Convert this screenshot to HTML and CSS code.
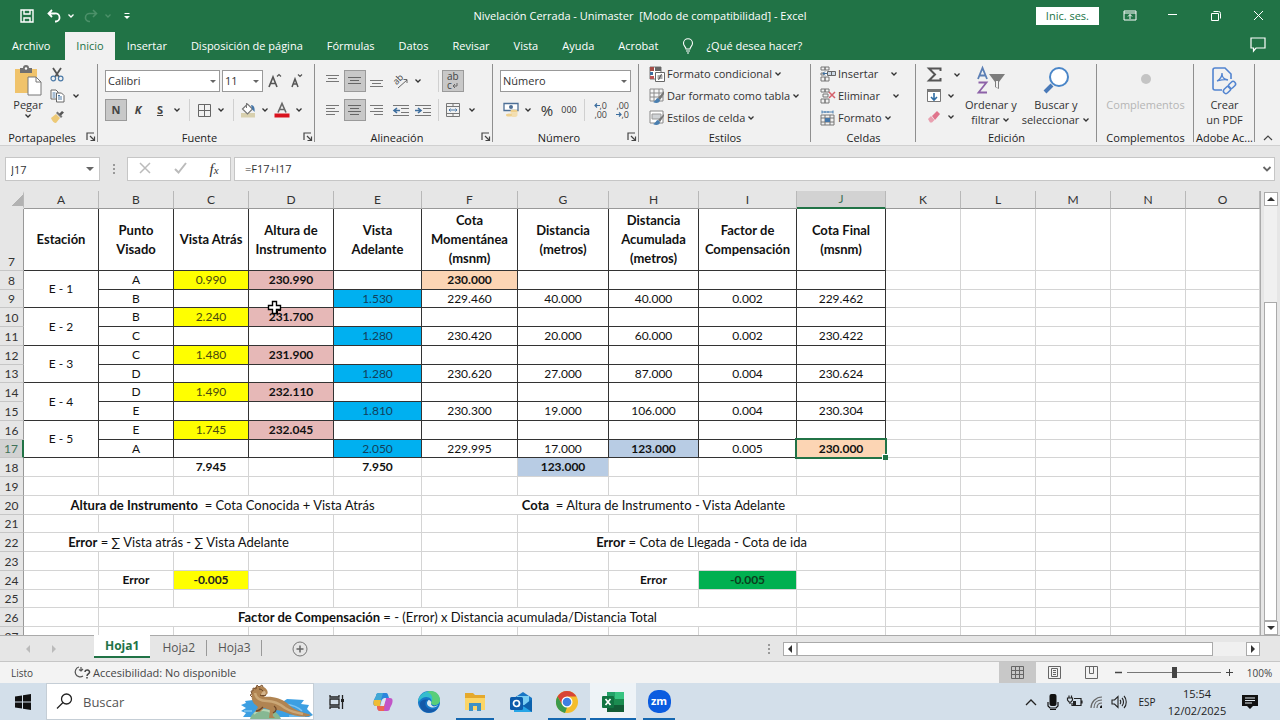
FILE: index.html
```html
<!DOCTYPE html>
<html lang="es">
<head>
<meta charset="utf-8">
<title>Nivelación Cerrada - Unimaster - Excel</title>
<link rel="stylesheet" href="styles.css">
</head>
<body>
<svg class="defs" aria-hidden="true">
  <symbol id="chev" viewBox="0 0 8 8"><path d="M1.500 2.500 4 5l2.500-2.500" fill="none" stroke="currentColor" stroke-width="1.300"/></symbol>
  <symbol id="launch" viewBox="0 0 10 10"><path d="M1 8V1h7M4 4l4 4M8.500 4.500v4h-4" fill="none" stroke="#444" stroke-width="1.200"/></symbol>
  <symbol id="brushgrid" viewBox="0 0 16 16"><path d="M1 1h13v12H1zM1 5h13M1 9h13M5 1v12M10 1v12" fill="#f6f6f6" stroke="#8a8a8a"/><path d="m15 3-6 7 2 2 4-6z" fill="#777"/><path d="M9 10c-2 0-2 3-5 4 3 2 7 1 7-2z" fill="#4a7fb0"/></symbol>
</svg>

<header class="titlebar">
  <div class="quick">
    <button class="q" aria-label="Guardar"><svg width="14" height="14" viewBox="0 0 14 14"><path d="M1 1h12v12H1zM4 1v4h6V1M4 13V9h6v4" fill="none" stroke="#fff" stroke-width="1.400"/></svg></button>
    <button class="q" aria-label="Deshacer"><svg width="14" height="14" viewBox="0 0 14 14"><path d="M5 1 1.500 4.500 5 8M2 4.500h6a4 4 0 0 1 1 8H8" fill="none" stroke="#fff" stroke-width="1.800"/></svg></button>
    <button class="q narrow" aria-label="Opciones de deshacer"><svg width="8" height="8"><use href="#chev"/></svg></button>
    <button class="q dim" aria-label="Rehacer"><svg width="14" height="14" viewBox="0 0 14 14"><path d="M9 1l3.500 3.500L9 8M12 4.500H6a4 4 0 0 0-1 8h1" fill="none" stroke="currentColor" stroke-width="1.600"/></svg></button>
    <button class="q narrow dim" aria-label="Opciones de rehacer"><svg width="8" height="8"><use href="#chev"/></svg></button>
    <button class="q more" aria-label="Personalizar"><svg width="8" height="8" viewBox="0 0 8 8"><path d="M1.500 1.500h5" stroke="#fff"/><path d="M1 4h6L4 7z" fill="#fff"/></svg></button>
  </div>
  <h1>Nivelación Cerrada - Unimaster&nbsp; [Modo de compatibilidad] - Excel</h1>
  <div class="window">
    <button class="signin">Inic. ses.</button>
    <button class="w" aria-label="Opciones de la cinta"><svg width="14" height="12" viewBox="0 0 14 12"><path d="M1 1h12v9H1zM1 3h12M7 9V4.500M5 6.500l2-2 2 2" fill="none" stroke="#fff"/></svg></button>
    <button class="w" aria-label="Minimizar"><svg width="12" height="12"><path d="M1 4.500h9" stroke="#fff"/></svg></button>
    <button class="w" aria-label="Restaurar"><svg width="12" height="12" viewBox="0 0 12 12"><path d="M1.500 3.500h7v7h-7zM3.500 1.500h5a2 2 0 0 1 2 2v5" fill="none" stroke="#fff"/></svg></button>
    <button class="w" aria-label="Cerrar"><svg width="12" height="12"><path d="M1 1l9 9M10 1 1 10" stroke="#fff"/></svg></button>
  </div>
</header>

<nav class="tabs">
  <button>Archivo</button><button class="active">Inicio</button><button>Insertar</button><button>Disposición de página</button><button>Fórmulas</button><button>Datos</button><button>Revisar</button><button>Vista</button><button>Ayuda</button><button>Acrobat</button>
  <button class="tell"><svg width="12" height="16" viewBox="0 0 12 16"><path d="M4 11C4 9 1.500 8 1.500 5.200a4.500 4.500 0 0 1 9 0C10.500 8 8 9 8 11zM4 13h4M5 15h2" fill="none" stroke="#fff" stroke-width="1.100"/></svg>¿Qué desea hacer?</button>
  <button class="comment" aria-label="Comentarios"><svg width="16" height="15" viewBox="0 0 16 15"><path d="M1 1h14v10H6l-2.500 3v-3H1z" fill="none" stroke="#fff" stroke-width="1.200"/></svg></button>
</nav>

<section class="ribbon">
  <div class="group g-clip">
    <div class="tools side">
      <button class="big"><svg width="28" height="30" viewBox="0 0 28 30"><path d="M1 3h22v24H1z" fill="#f0c36b"/><path d="M6 2h3a3 3 0 0 1 6 0h3v5H6z" fill="#707070"/><circle cx="12" cy="2.500" r="1.200" fill="#fff"/><path d="M14 11h8l5 5v13H14z" fill="#fff" stroke="#777"/><path d="M22 11v5h5" fill="none" stroke="#777"/></svg><span>Pegar</span><svg width="8" height="8"><use href="#chev"/></svg></button>
      <div class="stack">
        <div class="line"><button class="t" aria-label="Cortar"><svg width="14" height="15" viewBox="0 0 14 15"><path d="M3 1l6 9M11 1 5 10" stroke="#555" stroke-width="1.800"/><circle cx="3.300" cy="11.500" r="2.300" fill="none" stroke="#4d7ba8" stroke-width="1.200"/><circle cx="10.700" cy="11.500" r="2.300" fill="none" stroke="#4d7ba8" stroke-width="1.200"/></svg></button></div>
        <div class="line"><button class="t" aria-label="Copiar"><svg width="15" height="14" viewBox="0 0 15 14"><path d="M1 1h5l2 2v7H1z" fill="#fff" stroke="#666"/><path d="M6.500 4h5L14 6.500V13H6.500z" fill="#fff" stroke="#666"/><path d="M2.500 4h3M2.500 6h3M2.500 8h3M8 8h4M8 10h4M8 6.500h2" stroke="#4d7ba8"/></svg></button><button class="c gap" aria-label="Opciones de copiar"><svg width="8" height="8"><use href="#chev"/></svg></button></div>
        <div class="line"><button class="t" aria-label="Copiar formato"><svg width="15" height="13" viewBox="0 0 15 13"><path d="m1 8 5-4 4 4-4 5c-2 0-4-2-5-5z" fill="#edc976"/><path d="m6 3 5 5 1.500-1.500-5-5z" fill="#777"/><path d="m9 4 3-3 2 1.500-3 3z" fill="#555"/></svg></button></div>
      </div>
    </div>
    <footer><span>Portapapeles</span><button class="launch" aria-label="Portapapeles"><svg width="10" height="10"><use href="#launch"/></svg></button></footer>
  </div>

  <div class="group g-font">
    <div class="tools">
      <div class="line">
        <span class="combo face"><select aria-label="Fuente"><option>Calibri</option></select></span>
        <span class="combo size"><select aria-label="Tamaño de fuente"><option>11</option></select></span>
        <button class="t" aria-label="Aumentar tamaño"><svg width="16" height="16" viewBox="0 0 16 16"><path d="M2 14 6 4l4 10M3.500 10.500h5" fill="none" stroke="#555" stroke-width="1.600"/><path d="m10 3.500 2-2 2 2" fill="none" stroke="#555" stroke-width="1.200"/></svg></button>
        <button class="t" aria-label="Disminuir tamaño"><svg width="16" height="16" viewBox="0 0 16 16"><path d="m3 14 3-8 3 8M4 11h4" fill="none" stroke="#555" stroke-width="1.500"/><path d="m9 1.500 2 2 2-2" fill="none" stroke="#555" stroke-width="1.200"/></svg></button>
      </div>
      <div class="line">
        <button class="t on bold">N</button><button class="t bold italic">K</button><button class="t bold under">S</button><button class="c" aria-label="Subrayado"><svg width="8" height="8"><use href="#chev"/></svg></button>
        <i class="sep"></i>
        <button class="t" aria-label="Bordes"><svg width="13" height="13"><path d="M.5.5h12v12H.5zM6.500.5v12M.5 6.500h12" fill="none" stroke="#666"/></svg></button><button class="c" aria-label="Opciones de bordes"><svg width="8" height="8"><use href="#chev"/></svg></button>
        <i class="sep"></i>
        <button class="t" aria-label="Color de relleno"><svg width="16" height="16" viewBox="0 0 16 16"><path d="M1 11h14v4.500H1z" fill="#d8d0ae"/><path d="m2.500 7 5-5 5 5-5 5z" fill="#fff" stroke="#777" stroke-width="1.200"/><path d="M6.500 6V1" stroke="#777"/><path d="M11 3c3 0 4 3 3.500 7L12 7z" fill="#4576a8"/></svg></button><button class="c" aria-label="Opciones de relleno"><svg width="8" height="8"><use href="#chev"/></svg></button>
        <button class="t" aria-label="Color de fuente"><svg width="16" height="16" viewBox="0 0 16 16"><path d="m4 10.500 4-9 4 9M5.500 7.500h5" fill="none" stroke="#666" stroke-width="1.600"/><path d="M.5 11.500h15v4H.5z" fill="#d9131e"/></svg></button><button class="c" aria-label="Opciones de color"><svg width="8" height="8"><use href="#chev"/></svg></button>
      </div>
    </div>
    <footer><span>Fuente</span><button class="launch" aria-label="Fuente"><svg width="10" height="10"><use href="#launch"/></svg></button></footer>
  </div>

  <div class="group g-align">
    <div class="tools">
      <div class="line">
        <button class="t" aria-label="Alinear arriba"><svg width="14" height="14"><path d="M0 1.500h13M2 4.500h9M0 7.500h13" stroke="#777"/></svg></button>
        <button class="t on" aria-label="Alinear en medio"><svg width="14" height="14"><path d="M0 3.500h13M2 6.500h9M0 9.500h13" stroke="#666"/></svg></button>
        <button class="t" aria-label="Alinear abajo"><svg width="14" height="14"><path d="M0 6.500h13M2 9.500h9M0 12.500h13" stroke="#777"/></svg></button>
        <button class="t gap" aria-label="Orientación"><svg width="16" height="16" viewBox="0 0 16 16"><text x="1" y="10" transform="rotate(-45 5 8)" class="glyph">ab</text><path d="m5 15 9-8M10.500 6.500H14V10" fill="none" stroke="#666"/></svg></button><button class="c" aria-label="Opciones de orientación"><svg width="8" height="8"><use href="#chev"/></svg></button>
        <i class="sep wide"></i>
        <button class="t on wrap" aria-label="Ajustar texto"><span>ab</span><span>c<svg width="6" height="6"><path d="M5 0v3H1m2-2L1 3l2 2" fill="none" stroke="#666"/></svg></span></button>
      </div>
      <div class="line">
        <button class="t" aria-label="Alinear a la izquierda"><svg width="14" height="12"><path d="M0 1.500h13M0 4.500h9M0 7.500h13M0 10.500h9" stroke="#777"/></svg></button>
        <button class="t on" aria-label="Centrar"><svg width="14" height="12"><path d="M0 1.500h13M2 4.500h9M0 7.500h13M2 10.500h9" stroke="#666"/></svg></button>
        <button class="t" aria-label="Alinear a la derecha"><svg width="14" height="12"><path d="M0 1.500h13M4 4.500h9M0 7.500h13M4 10.500h9" stroke="#777"/></svg></button>
        <button class="t gap" aria-label="Disminuir sangría"><svg width="16" height="13" viewBox="0 0 16 13"><path d="M0 1.500h16M8 4.500h8M8 8.500h8M0 11.500h16" stroke="#777"/><path d="M7 6.500H1M4 4 1 6.500 4 9" fill="none" stroke="#3d6e9e" stroke-width="1.600"/></svg></button>
        <button class="t" aria-label="Aumentar sangría"><svg width="16" height="13" viewBox="0 0 16 13"><path d="M0 1.500h16M8 4.500h8M8 8.500h8M0 11.500h16" stroke="#777"/><path d="M0 6.500h6M3 4l3 2.500L3 9" fill="none" stroke="#3d6e9e" stroke-width="1.600"/></svg></button>
        <i class="sep tight"></i>
        <button class="t" aria-label="Combinar y centrar"><svg width="14" height="14" viewBox="0 0 14 14"><path d="M.5.5h13v13H.5zM.5 3.500h13M.5 10.500h13M7 .5v3M7 10.500v3" fill="none" stroke="#777"/><path d="M3 7h8M4.500 5.500 3 7l1.500 1.500M9.500 5.500 11 7 9.500 8.500" fill="none" stroke="#4576a8"/></svg></button><button class="c gap" aria-label="Opciones de combinar"><svg width="8" height="8"><use href="#chev"/></svg></button>
      </div>
    </div>
    <footer><span>Alineación</span><button class="launch" aria-label="Alineación"><svg width="10" height="10"><use href="#launch"/></svg></button></footer>
  </div>

  <div class="group g-num">
    <div class="tools">
      <div class="line"><span class="combo format"><select aria-label="Formato de número"><option>Número</option></select></span></div>
      <div class="line">
        <button class="t" aria-label="Moneda"><svg width="16" height="16" viewBox="0 0 16 16"><path d="M1 1.500h14v7H1z" fill="#fff" stroke="#4d6f96" stroke-width="1.300"/><circle cx="8" cy="5" r="2" fill="#4d6f96"/><ellipse cx="11" cy="9" rx="3.500" ry="1.500" fill="#efd08c"/><path d="M7.500 9v4.500c1 2 6 2 7 0V9c-1 2-6 2-7 0z" fill="#f3deb0"/><ellipse cx="6" cy="13" rx="3" ry="1.500" fill="#efd08c"/></svg></button><button class="c" aria-label="Opciones de moneda"><svg width="8" height="8"><use href="#chev"/></svg></button>
        <button class="t gap percent">%</button><button class="t zeros">000</button>
        <i class="sep tight"></i>
        <button class="t digits" aria-label="Aumentar decimales"><span><svg width="6" height="7"><path d="M6 3.500H1m2-2-2 2 2 2" fill="none" stroke="#3d6e9e" stroke-width="1.200"/></svg>,0</span><span>,00</span></button>
        <button class="t digits" aria-label="Disminuir decimales"><span>,00</span><span><svg width="6" height="7"><path d="M0 3.500h5m-2-2 2 2-2 2" fill="none" stroke="#3d6e9e" stroke-width="1.200"/></svg>,0</span></button>
      </div>
    </div>
    <footer><span>Número</span><button class="launch" aria-label="Número"><svg width="10" height="10"><use href="#launch"/></svg></button></footer>
  </div>

  <div class="group g-style">
    <div class="tools list">
      <button class="item"><svg width="16" height="16" viewBox="0 0 16 16"><path d="M1 1h11v12H1z" fill="#fff" stroke="#777"/><path d="M1 1h4v4H1z" fill="#a44c46"/><path d="M6 1h6v4H6z" fill="#666"/><path d="M1 6h3v3H1z" fill="#3d6e9e"/><path d="M1 10h4v3H1z" fill="#b55"/><path d="M6.500 6.500h9v9h-9z" fill="#fff" stroke="#666"/><path d="M8.500 10h5M8.500 12h5M12.500 8l-3 6" stroke="#555"/></svg><span>Formato condicional</span><svg width="8" height="8"><use href="#chev"/></svg></button>
      <button class="item"><svg width="16" height="16"><use href="#brushgrid"/></svg><span>Dar formato como tabla</span><svg width="8" height="8"><use href="#chev"/></svg></button>
      <button class="item"><svg width="16" height="16" viewBox="0 0 16 16"><path d="M1 1h13v12H1z" fill="#fff" stroke="#888"/><path d="M3 4h9v5H3z" fill="#d0d3d6" stroke="#999"/><path d="m15 4-6 6 2 2 4-6z" fill="#777"/><path d="M9 10c-2 0-2 3-5 4 3 2 7 1 7-2z" fill="#4a7fb0"/></svg><span>Estilos de celda</span><svg width="8" height="8"><use href="#chev"/></svg></button>
    </div>
    <footer><span>Estilos</span></footer>
  </div>

  <div class="group g-cells">
    <div class="tools list">
      <button class="item"><svg width="16" height="16" viewBox="0 0 16 16"><path d="M1 1h4v3H1zM5 1h4v3H5zM1 11h4v4H1zM5 11h4v4H5zM1 7h3v2H1z" fill="none" stroke="#777"/><path d="M7.500 5.500h8v4h-8zM11.500 5.500v4" fill="#ccd9e6" stroke="#666"/><path d="M7 7.500H3m2-2-2 2 2 2" fill="none" stroke="#3d6e9e"/></svg><span>Insertar</span><svg class="push" width="8" height="8"><use href="#chev"/></svg></button>
      <button class="item"><svg width="16" height="16" viewBox="0 0 16 16"><path d="M1 1h4v3H1zM5 1h4v3H5zM1 11h4v4H1zM5 11h4v4H5zM3 6h5v3H3z" fill="none" stroke="#777"/><path d="m9 4 6 6M15 4l-6 6" stroke="#d5606a" stroke-width="1.500"/></svg><span>Eliminar</span><svg class="push" width="8" height="8"><use href="#chev"/></svg></button>
      <button class="item"><svg width="16" height="16" viewBox="0 0 16 16"><path d="M2 2h11M2 .5v3M13 .5v3M5 1v2M8 1v2" stroke="#4a7fb0"/><path d="M1 5h13v10H1zM1 8h13M1 12h13M5 5v10M10 5v10" fill="none" stroke="#777"/><path d="M5 8h5v4H5z" fill="#4576a8"/></svg><span>Formato</span><svg width="8" height="8"><use href="#chev"/></svg></button>
    </div>
    <footer><span>Celdas</span></footer>
  </div>

  <div class="group g-edit">
    <div class="tools side">
      <div class="stack">
        <div class="line"><button class="t" aria-label="Autosuma"><svg width="15" height="15" viewBox="0 0 15 15"><path d="M13.500 4V1.500H2L8 7.500 2 13.500h11.500V11" fill="none" stroke="#555" stroke-width="2"/></svg></button><button class="c far" aria-label="Opciones de autosuma"><svg width="8" height="8"><use href="#chev"/></svg></button></div>
        <div class="line"><button class="t" aria-label="Rellenar"><svg width="14" height="15" viewBox="0 0 14 15"><path d="M.5 1.500h13v12H.5z" fill="#fff" stroke="#777"/><path d="M0 1h14v3H0z" fill="#777"/><path d="M7 5v7M4 9l3 3 3-3" fill="none" stroke="#2f6da4" stroke-width="1.600"/></svg></button><button class="c" aria-label="Opciones de rellenar"><svg width="8" height="8"><use href="#chev"/></svg></button></div>
        <div class="line"><button class="t" aria-label="Borrar"><svg width="14" height="14" viewBox="0 0 14 14"><path d="m5 6 5-5 3 3-5 6z" fill="#e0748c"/><path d="m1 9 3-3 3.500 4L5 12.500H3z" fill="#e9a0b0"/></svg></button><button class="c" aria-label="Opciones de borrar"><svg width="8" height="8"><use href="#chev"/></svg></button></div>
      </div>
      <button class="big"><svg width="30" height="30" viewBox="0 0 30 30"><path d="M2 13 6.500 2 11 13M3.500 9.500h6" fill="none" stroke="#5b7fb5" stroke-width="1.800"/><path d="M2.500 16.500h8l-8 10h8.500" fill="none" stroke="#8d62a8" stroke-width="1.800"/><path d="M13 8h16l-6 8v7l-4-2v-5z" fill="#7d7d7d"/><path d="M20 15v6l2 1v-7z" fill="#f1f1f1"/></svg><span>Ordenar y<br>filtrar <svg width="8" height="8"><use href="#chev"/></svg></span></button>
      <button class="big"><svg width="30" height="30" viewBox="0 0 30 30"><path d="m11 19-7 7" stroke="#4a7ab8" stroke-width="4"/><circle cx="18" cy="11" r="9" fill="#fff" stroke="#4a86c8" stroke-width="2"/></svg><span>Buscar y<br>seleccionar <svg width="8" height="8"><use href="#chev"/></svg></span></button>
    </div>
    <footer><span>Edición</span></footer>
  </div>

  <div class="group g-add">
    <div class="tools side center"><button class="big" disabled><svg width="30" height="30"><circle cx="15" cy="13" r="5" fill="#c4c4c4"/></svg><span>Complementos</span></button></div>
    <footer><span>Complementos</span></footer>
  </div>

  <div class="group g-pdf">
    <div class="tools side center"><button class="big"><svg width="30" height="30" viewBox="0 0 30 30"><path d="M13 24H6a2 2 0 0 1-2-2V4a2 2 0 0 1 2-2h10l6 6v5" fill="none" stroke="#5284d0" stroke-width="1.600"/><path d="M8 15c4-2 5-5 5-8 0 5 2 6 6 7-4-1-7 0-11 1" fill="none" stroke="#5284d0" stroke-width="1.300"/><rect x="-4" y="-2.500" width="8" height="5" rx="2.500" transform="translate(18 24) rotate(-45)" fill="none" stroke="#5284d0" stroke-width="1.500"/><rect x="-4" y="-2.500" width="8" height="5" rx="2.500" transform="translate(23 19) rotate(-45)" fill="none" stroke="#5284d0" stroke-width="1.500"/></svg><span>Crear<br>un PDF</span></button></div>
    <footer><span>Adobe Ac...</span></footer>
  </div>
  <button class="collapse" aria-label="Contraer la cinta"><svg width="12" height="8"><path d="m2 6 4-4 4 4" fill="none" stroke="#444" stroke-width="1.200"/></svg></button>
</section>

<section class="formula">
  <label class="namebox combo"><input value="J17" aria-label="Cuadro de nombres"></label>
  <i class="dots"></i>
  <div class="fx">
    <button aria-label="Cancelar"><svg width="12" height="12"><path d="m1 1 10 10M11 1 1 11" stroke="#bbb" stroke-width="1.500"/></svg></button>
    <button aria-label="Introducir"><svg width="13" height="12"><path d="m1 7 3.500 3.500L12 1" fill="none" stroke="#bbb" stroke-width="2"/></svg></button>
    <button class="fn" aria-label="Insertar función">f<small>x</small></button>
  </div>
  <div class="expr"><input value="=F17+I17" aria-label="Barra de fórmulas"><button aria-label="Expandir"><svg width="10" height="8"><path d="m1.500 2 3.500 3.500L8.500 2" fill="none" stroke="#666" stroke-width="1.800"/></svg></button></div>
</section>

<main class="workspace">
  <div class="sheet">
    <table>
      <colgroup><col class="rowhead"><col class="w75"><col class="w75"><col class="w75"><col class="w85"><col class="w88"><col class="w96"><col class="w91"><col class="w90"><col class="w98"><col class="w89"><col class="w75"><col class="w75"><col class="w75"><col class="w75"><col></colgroup>
      <thead><tr><th class="corner"></th><th>A</th><th>B</th><th>C</th><th>D</th><th>E</th><th>F</th><th>G</th><th>H</th><th>I</th><th class="current">J</th><th>K</th><th>L</th><th>M</th><th>N</th><th>O</th></tr></thead>
      <tbody>
        <tr class="s titles"><th>7</th><td>Estación</td><td>Punto Visado</td><td>Vista Atrás</td><td>Altura de Instrumento</td><td>Vista Adelante</td><td>Cota Momentánea (msnm)</td><td>Distancia (metros)</td><td>Distancia Acumulada (metros)</td><td>Factor de Compensación</td><td>Cota Final (msnm)</td><td class="x"></td><td class="x"></td><td class="x"></td><td class="x"></td><td class="x"></td></tr>
        <tr class="s"><th>8</th><td rowspan="2">E - 1</td><td>A</td><td class="yellow">0.990</td><td class="pink">230.990</td><td></td><td class="peach">230.000</td><td></td><td></td><td></td><td></td><td class="x"></td><td class="x"></td><td class="x"></td><td class="x"></td><td class="x"></td></tr>
        <tr class="s"><th>9</th><td>B</td><td></td><td></td><td class="blue">1.530</td><td>229.460</td><td>40.000</td><td>40.000</td><td>0.002</td><td>229.462</td><td class="x"></td><td class="x"></td><td class="x"></td><td class="x"></td><td class="x"></td></tr>
        <tr class="s"><th>10</th><td rowspan="2">E - 2</td><td>B</td><td class="yellow">2.240</td><td class="pink">231.700</td><td></td><td></td><td></td><td></td><td></td><td></td><td class="x"></td><td class="x"></td><td class="x"></td><td class="x"></td><td class="x"></td></tr>
        <tr class="s"><th>11</th><td>C</td><td></td><td></td><td class="blue">1.280</td><td>230.420</td><td>20.000</td><td>60.000</td><td>0.002</td><td>230.422</td><td class="x"></td><td class="x"></td><td class="x"></td><td class="x"></td><td class="x"></td></tr>
        <tr class="s"><th>12</th><td rowspan="2">E - 3</td><td>C</td><td class="yellow">1.480</td><td class="pink">231.900</td><td></td><td></td><td></td><td></td><td></td><td></td><td class="x"></td><td class="x"></td><td class="x"></td><td class="x"></td><td class="x"></td></tr>
        <tr class="s"><th>13</th><td>D</td><td></td><td></td><td class="blue">1.280</td><td>230.620</td><td>27.000</td><td>87.000</td><td>0.004</td><td>230.624</td><td class="x"></td><td class="x"></td><td class="x"></td><td class="x"></td><td class="x"></td></tr>
        <tr class="s"><th>14</th><td rowspan="2">E - 4</td><td>D</td><td class="yellow">1.490</td><td class="pink">232.110</td><td></td><td></td><td></td><td></td><td></td><td></td><td class="x"></td><td class="x"></td><td class="x"></td><td class="x"></td><td class="x"></td></tr>
        <tr class="s"><th>15</th><td>E</td><td></td><td></td><td class="blue">1.810</td><td>230.300</td><td>19.000</td><td>106.000</td><td>0.004</td><td>230.304</td><td class="x"></td><td class="x"></td><td class="x"></td><td class="x"></td><td class="x"></td></tr>
        <tr class="s"><th>16</th><td rowspan="2">E - 5</td><td>E</td><td class="yellow">1.745</td><td class="pink">232.045</td><td></td><td></td><td></td><td></td><td></td><td></td><td class="x"></td><td class="x"></td><td class="x"></td><td class="x"></td><td class="x"></td></tr>
        <tr class="s"><th class="current">17</th><td>A</td><td></td><td></td><td class="blue">2.050</td><td>229.995</td><td>17.000</td><td class="steel">123.000</td><td>0.005</td><td class="peach selected">230.000</td><td class="x"></td><td class="x"></td><td class="x"></td><td class="x"></td><td class="x"></td></tr>
        <tr><th>18</th><td></td><td></td><td><b>7.945</b></td><td></td><td><b>7.950</b></td><td></td><td class="steel">123.000</td><td></td><td></td><td></td><td></td><td></td><td></td><td></td><td></td></tr>
        <tr><th>19</th><td></td><td></td><td></td><td></td><td></td><td></td><td></td><td></td><td></td><td></td><td></td><td></td><td></td><td></td><td></td></tr>
        <tr><th>20</th><td colspan="5"><b>Altura de Instrumento</b>&nbsp; = Cota Conocida + Vista Atrás</td><td colspan="5"><b>Cota</b>&nbsp; = Altura de Instrumento - Vista Adelante</td><td></td><td></td><td></td><td></td><td></td></tr>
        <tr><th>21</th><td></td><td></td><td></td><td></td><td></td><td></td><td></td><td></td><td></td><td></td><td></td><td></td><td></td><td></td><td></td></tr>
        <tr><th>22</th><td colspan="4"><b>Error</b> = ∑ Vista atrás - ∑ Vista Adelante</td><td></td><td></td><td colspan="4"><b>Error</b> = Cota de Llegada - Cota de ida</td><td></td><td></td><td></td><td></td><td></td></tr>
        <tr><th>23</th><td></td><td></td><td></td><td></td><td></td><td></td><td></td><td></td><td></td><td></td><td></td><td></td><td></td><td></td><td></td></tr>
        <tr><th>24</th><td></td><td><b>Error</b></td><td class="yellow strong">-0.005</td><td></td><td></td><td></td><td></td><td><b>Error</b></td><td class="green">-0.005</td><td></td><td></td><td></td><td></td><td></td><td></td></tr>
        <tr><th>25</th><td></td><td></td><td></td><td></td><td></td><td></td><td></td><td></td><td></td><td></td><td></td><td></td><td></td><td></td><td></td></tr>
        <tr><th>26</th><td></td><td colspan="8"><b>Factor de Compensación</b> = - (Error) x Distancia acumulada/Distancia Total</td><td></td><td></td><td></td><td></td><td></td><td></td></tr>
        <tr><th>27</th><td></td><td></td><td></td><td></td><td></td><td></td><td></td><td></td><td></td><td></td><td></td><td></td><td></td><td></td><td></td></tr>
      </tbody>
    </table>
    <svg class="cursor" width="16" height="16" viewBox="0 0 16 16"><path d="M5.500 1.500h4v4h4v4h-4v4h-4v-4h-4v-4h4z" fill="#fff" stroke="#000" stroke-width="1.400"/><path d="M10.500 14v-3.500H14" fill="none" stroke="#000"/></svg>
  </div>
  <div class="vscroll"><button aria-label="Subir"><i class="tri up"></i></button><span class="track"></span><span class="thumb"></span><button aria-label="Bajar"><i class="tri down"></i></button></div>
</main>

<section class="sheets">
  <div class="steps"><button aria-label="Hoja anterior"><i class="tri left pale"></i></button><button aria-label="Hoja siguiente"><i class="tri right pale"></i></button></div>
  <button class="tab active">Hoja1</button><button class="tab">Hoja2</button><button class="tab lined">Hoja3</button>
  <button class="plus" aria-label="Nueva hoja"><svg width="16" height="16"><circle cx="8" cy="8" r="7" fill="none" stroke="#777"/><path d="M8 4.500v7M4.500 8h7" stroke="#666" stroke-width="1.500"/></svg></button>
  <i class="dots"></i>
  <div class="hscroll"><button aria-label="Izquierda"><i class="tri left"></i></button><span class="thumb"></span><span class="track"></span><button aria-label="Derecha"><i class="tri right"></i></button></div>
</section>

<footer class="status">
  <span class="ready">Listo</span>
  <span class="access"><svg width="16" height="13" viewBox="0 0 16 13"><path d="M4 1a5 5 0 1 0 4 9M6 1v4M4 3.500 6 5l2-2" fill="none" stroke="#555" stroke-width="1.200"/><path d="M10 6c0-3 5-2.500 4.500.5-.5 1.500-2.500 1.500-2.500 3.500M12 11v1.500" fill="none" stroke="#444" stroke-width="1.500"/></svg>Accesibilidad: No disponible</span>
  <div class="views">
    <button class="on" aria-label="Normal"><svg width="13" height="13"><path d="M.5.5h12v12H.5zM4.500.5v12M8.500.5v12M.5 4.500h12M.5 8.500h12" fill="none" stroke="#666"/></svg></button>
    <button aria-label="Diseño de página"><svg width="13" height="13"><path d="M.5.5h12v12H.5zM3.500 2.500h6v8h-6zM5 4.500h3M5 6.500h3M5 8.500h3" fill="none" stroke="#666"/></svg></button>
    <button aria-label="Salto de página"><svg width="13" height="13"><path d="M.5.5h12v12H.5zM4.500.5v7h4v-7" fill="none" stroke="#666"/></svg></button>
  </div>
  <button class="zoom" aria-label="Alejar"><svg width="9" height="9"><path d="M1 4.500h7" stroke="#444" stroke-width="1.500"/></svg></button>
  <input type="range" min="0" max="100" value="50" aria-label="Zoom">
  <button class="zoom" aria-label="Acercar"><svg width="9" height="9"><path d="M1 4.500h7M4.500 1v7" stroke="#444"/></svg></button>
  <span class="pct">100%</span>
</footer>

<section class="taskbar">
  <button class="start" aria-label="Inicio"><svg width="16" height="16" viewBox="0 0 16 16"><path d="M0 2.500 7 1.500v6H0zM8 1.300 16 0v7.500H8zM0 8.500h7v6l-7-1zM8 8.500h8V16l-8-1.300z" fill="#111"/></svg></button>
  <label class="search"><svg width="17" height="17" viewBox="0 0 17 17"><circle cx="10.500" cy="6" r="5" fill="none" stroke="#222" stroke-width="1.300"/><path d="m7 9.500-6 6" stroke="#222" stroke-width="1.300"/></svg><input placeholder="Buscar" aria-label="Buscar">
    <svg class="art" width="72" height="35" viewBox="0 0 72 35"><path d="m4 17 8-1-1-2 32 3 3-2 17 1-3 4 8 1-2 4 6 6-4 2H2l3-4-5-2 5-3-5-3 5-2z" fill="#3c9fe2"/><path d="M44 20c9 1 14 4 17 7M48 32h16M3 27h8" fill="none" stroke="#7cc3f0" stroke-width="1.500"/><path d="M9 35c2-12 26-14 31 0z" fill="#86b893"/><path d="M13 30c5-5 13-5 18-1" fill="none" stroke="#b7d6b5" stroke-width="2"/><path d="M12 5c3-4 11-4 14 1 1 2 1 4-1 5l-2 2c9-1 18 2 23 6 5 6 14 9 24 12-5 3-17 1-24-2-4-2-8-3-12-3l-2 4c-1 2 1 3 2 4h-6l1-8-6-2-4 4h-5l3-5c-6-4-7-9-6-13 0-2 0-4 1-5z" fill="#b08452"/><path d="M14 9c1 5 5 8 12 8 8 0 13 3 18 7 5 3 12 5 18 6" fill="none" stroke="#cba877" stroke-width="2.500"/><path d="M24 7c1 2 1 3 0 4h-4c0-2 2-4 4-4z" fill="#d4b48b"/><path d="M18 5c2 0 3 1 4 2M19 11c2 1 4 1 6 0" fill="none" stroke="#5f3c22"/><path d="M11 13 9 11l2-1-1-3 2 0 0-3 3 1 1-4 2 2 3-2 1 2" fill="none" stroke="#7b5230"/><path d="M22 23c-2 2-4 4-7 4M33 22c3 2 3 5-1 7" fill="none" stroke="#6c4729" stroke-width="1.300"/></svg>
  </label>
  <nav class="apps">
    <button aria-label="Vista de tareas"><svg width="16" height="16" viewBox="0 0 16 16"><path d="M1 1v2h9V1M1 15v-2h9v2M1 5h9v6H1zM13.500 1v14" fill="none" stroke="#222" stroke-width="1.300"/><path d="M12 5h3v3h-3z" fill="#222"/></svg></button>
    <button aria-label="Copilot"><svg width="22" height="22" viewBox="0 0 22 22"><path d="M7 2h7c2 0 2 2 3 5h-4c-2 0-3 1-4 4l-1 4H4c-3 0-3-3-2-6l2-4c0-2 1-3 3-3z" fill="#2a86dd"/><path d="M2 9h7l-1 6H4c-3 0-3-3-2-6z" fill="#efbd36"/><path d="m4 5-2 4h7l2-7H7C5 2 4 3 4 5z" fill="#41a8d5"/><path d="M15 20H8c-2 0-3-2-3-5h4c2 0 3-1 4-4l1-4h4c3 0 3 3 2 6l-2 4c0 2-1 3-3 3z" fill="#c154c7"/><path d="M5 15h4c2 0 3-1 4-4l-1 9H8c-2 0-3-2-3-5z" fill="#ee6550"/><path d="M10 11c1-3 2-4 4-4l-2 8H9z" fill="#dce8f4"/></svg></button>
    <button aria-label="Edge"><svg width="24" height="24" viewBox="0 0 24 24"><circle cx="12" cy="12" r="11" fill="#1677c8"/><path d="M1 12C2-2 22-2 23 10c0 5-7 7-9 3 3-5-6-9-11-3z" fill="#35bdce"/><path d="M10 2c7-3 13 2 13 8 0 5-7 7-9 3 3-5 1-9-4-11z" fill="#59ce78"/><path d="M9 11c-3 6 5 11 12 7-6 8-19 5-18-5 1-3 6-5 10-2-2-1-3-1-4 0z" fill="#1559a8"/><path d="M12 10c3 1 2 3 2 4 1 3 4 3 7 1-2 4-11 3-11-2 0-1 1-3 2-3z" fill="#d6e8f2"/></svg></button>
    <button class="open" aria-label="Explorador"><svg width="22" height="20" viewBox="0 0 22 20"><path d="M1 1h8l2 2h10v15H1z" fill="#e5a92c"/><path d="M1 6h20v12H1z" fill="#fbd566"/><path d="M5 19v-8h12v8h-4v-5H9v5z" fill="#3d91c5"/></svg></button>
    <button aria-label="Outlook"><svg width="24" height="22" viewBox="0 0 24 22"><path d="M5 7 14 1l9 6v14H5z" fill="#1976c5"/><path d="M8 5h12v9H8z" fill="#79cdf2"/><path d="m5 10 9 6 9-8v13H5z" fill="#25a5e7"/><path d="m14 15 9-7v13z" fill="#0c62ad"/><rect x="1" y="6" width="13" height="13" rx="1.500" fill="#0d5cab"/><circle cx="7.500" cy="12.500" r="3" fill="none" stroke="#fff" stroke-width="1.700"/></svg></button>
    <button class="open" aria-label="Chrome"><svg width="24" height="24" viewBox="0 0 24 24"><circle cx="12" cy="12" r="11" fill="#f4bd2b"/><path d="M2.500 6.500A11 11 0 0 1 21.500 6.500H12L7.200 14.800z" fill="#d84436"/><path d="M2.500 6.500 7.300 15l4.700 2.500L10 23A11 11 0 0 1 2.500 6.500z" fill="#3b9a4b"/><circle cx="12" cy="12" r="5.500" fill="#fff"/><circle cx="12" cy="12" r="4.300" fill="#3f7fe0"/></svg></button>
    <button class="open front" aria-label="Excel"><svg width="24" height="22" viewBox="0 0 24 22"><path d="M6 1h17v20H6z" fill="#1b8c50"/><path d="M14 1h9v7h-9z" fill="#38c481"/><path d="M6 1h8v6H6z" fill="#24a269"/><path d="M14 14h9v7H6v-7z" fill="#125c36"/><rect x="1" y="5" width="12" height="12" rx="1" fill="#117442"/><path d="m4.500 8 5 6M9.500 8l-5 6" stroke="#fff" stroke-width="1.700"/></svg></button>
    <button class="open short" aria-label="Zoom"><span class="zm">zm</span></button>
  </nav>
  <div class="tray">
    <button aria-label="Iconos ocultos"><svg width="12" height="8"><path d="m1 7 5-5 5 5" fill="none" stroke="#222" stroke-width="1.300"/></svg></button>
    <button aria-label="Micrófono"><svg width="12" height="16" viewBox="0 0 12 16"><rect x="2.500" y="0" width="7" height="12" rx="2" fill="#111"/><path d="M1 8v4l2 2h6l2-2V8M3 15.500h6" fill="none" stroke="#111" stroke-width="1.200"/></svg></button>
    <button aria-label="Batería"><svg width="16" height="13" viewBox="0 0 16 13"><path d="M7 3.500h7v7H5V8M15 5.500v3M.5 3h5v2L4 7H2L.5 5zM2 3V.5M4.500 3V.5M3 7v2" fill="none" stroke="#222" stroke-width="1.200"/><path d="M6 6h3v4H6z" fill="#222"/></svg></button>
    <button aria-label="Red"><svg width="14" height="14" viewBox="0 0 14 14"><path d="M1 13C1 7 6 2 12 2M4 13c0-5 3-8 8-8M7 13c0-3 2-5 5-5" fill="none" stroke="#666" stroke-width="1.200"/><path d="M10 13c0-2 .5-2.500 2-2.500V13z" fill="#111"/></svg></button>
    <button aria-label="Volumen"><svg width="17" height="14" viewBox="0 0 17 14"><path d="M1 5h2.500L7 1.500v11L3.500 9H1zM9 5c1 1 1 3 0 4M11 3c2 2 2 6 0 8M13 1c3 3 3 9 0 12" fill="none" stroke="#222" stroke-width="1.100"/></svg></button>
    <span class="lang">ESP</span>
    <time>15:54<br>12/02/2025</time>
    <button class="notes" aria-label="Notificaciones"><svg width="16" height="16" viewBox="0 0 16 16"><path d="M0 1h16v11h-5l-3 3-3-3H0z" fill="#111"/><path d="M3 4h10M3 6.500h10M3 9h7" stroke="#dfe7ee" stroke-width="1.100"/></svg></button>
  </div>
</section>
</body>
</html>
```
FILE: styles.css
```css
* { box-sizing: border-box; }
body {
  margin: 0; height: 100vh; display: flex; flex-direction: column; overflow: hidden;
  background: #e6e6e6; color: #333;
  font: 11px/14px "Open Sans", "Noto Sans", sans-serif;
}
.defs { position: absolute; width: 0; height: 0; }
button { border: 0; padding: 0; margin: 0; background: none; color: inherit; font: inherit; white-space: nowrap; }
input, select { font: inherit; color: inherit; min-width: 0; }
svg { flex: none; overflow: visible; }

.titlebar { flex: none; height: 32px; background: #217346; color: #fff; display: grid; grid-template-columns: 1fr auto 1fr; align-items: center; }
.titlebar h1 { margin: 0; font-size: 11px; font-weight: 400; }
.quick { display: flex; padding-left: 15px; }
.q { width: 24px; height: 20px; display: grid; place-items: center; }
.q:nth-child(2) { margin-left: 3px; }
.q.narrow { width: 10px; }
.q.dim { color: #4c9069; }
.q.dim:nth-child(4) { margin-left: 3px; }
.q.more { width: 20px; margin-left: 4px; }
.window { display: flex; align-items: center; justify-content: flex-end; }
.signin { background: #fff; color: #217346; height: 18px; padding: 0 10px; margin-right: 9px; }
.w { width: 43px; height: 28px; display: grid; place-items: center; }

.tabs { flex: none; height: 28px; background: #217346; color: #fff; display: flex; align-items: stretch; }
.tabs button { padding: 0 12px; }
.tabs .active { background: #f1f1f1; color: #217346; padding: 0 11px; margin-left: 3px; }
.tabs .tell { display: flex; align-items: center; gap: 12px; padding-left: 12px; }
.tabs .comment { margin-left: auto; padding: 0 14px; }

.ribbon { flex: none; height: 86px; background: #f1f1f1; border-bottom: 1px solid #d0d0d0; display: flex; color: #333; }
.group { display: flex; flex-direction: column; justify-content: space-between; position: relative; min-width: 0; padding-top: 2px; }
.group::after { content: ""; position: absolute; right: 0; top: 4px; bottom: 3px; border-right: 1px solid #8f8f8f; }
.g-clip { flex: 98 1 0; } .g-font { flex: 217 1 0; } .g-align { flex: 178 1 0; } .g-num { flex: 146 1 0; }
.g-style { flex: 172 1 0; } .g-cells { flex: 105 1 0; } .g-edit { flex: 181 1 0; } .g-add { flex: 97 1 0; } .g-pdf { flex: 61 1 0; }
.group footer { display: flex; justify-content: center; align-items: center; height: 14px; color: #222; white-space: nowrap; }
.group footer span { flex: 1; text-align: center; }
.launch { width: 14px; height: 14px; }
.collapse { flex: 25 1 0; align-self: flex-end; height: 14px; }
.tools { display: flex; flex-direction: column; gap: 7px; padding: 8px 0 0 7px; }
.line { display: flex; align-items: center; height: 22px; }
.t { width: 22px; height: 22px; display: grid; place-items: center; flex: none; }
.t.on { background: #c8c8c8; border: 1px solid #9a9a9a; }
.c { width: 12px; height: 22px; flex: none; display: grid; place-items: center; }
.gap { margin-left: 2px; }
.far { margin-left: 6px; }
.bold { font-weight: 700; color: #444; }
.italic { font-style: italic; }
.under { text-decoration: underline; }
.percent { font-size: 15px; }
.zeros { font-size: 9px; }
.glyph { font: 9px "Open Sans", sans-serif; fill: #444; }
.wrap, .digits { align-content: center; color: #444; }
.wrap { font-size: 10px; line-height: 9px; justify-items: start; padding-left: 4px; }
.digits { font-size: 9px; line-height: 9px; justify-items: end; padding-right: 3px; }
.sep { width: 1px; height: 22px; background: #d0d0d0; margin: 0 3px 0 6px; flex: none; }
.sep.wide { margin-left: 14px; }
.sep.tight { margin-left: 4px; }
.combo { position: relative; display: block; height: 22px; background: #fff; border: 1px solid #999; }
.combo select, .combo input { appearance: none; width: 100%; height: 100%; border: 0; padding: 0 2px; background: none; outline: 0; }
.combo::after { content: ""; position: absolute; right: 3px; top: 9px; border: 3px solid transparent; border-top-color: #666; border-bottom: 0; }
.combo.face { width: 115px; }
.combo.size { width: 41px; margin: 0 1px 0 2px; }
.combo.format { width: 131px; }
.side { flex-direction: row; gap: 0; padding: 2px 0 0 0; }
.side.center { justify-content: center; }
.stack .line { height: 21px; }
.g-clip .side { padding-left: 12px; }
.g-edit .side { padding-left: 7px; }
.g-clip .stack { padding-left: 2px; }
.big { display: flex; flex-direction: column; align-items: center; align-self: flex-start; min-width: 32px; line-height: 15px; padding-top: 2px; }
.big span { margin-top: 1px; }
.g-edit .big { padding: 2px 3px 0 2px; }
.big:disabled { color: #b5b5b5; }
.list { gap: 2px; padding: 2px 0 0 10px; align-items: flex-start; }
.item { height: 20px; display: flex; align-items: center; gap: 2px; }
.g-cells .list { padding-left: 9px; }
.item .push { margin-left: 10px; }

.formula { flex: none; height: 45px; padding: 11px 5px 10px; display: flex; gap: 3px; align-items: stretch; }
.namebox { width: 95px; border-color: #c6c6c6; height: 24px; }
.namebox input { padding-left: 5px; }
.namebox::after { right: 5px; border-width: 4px 4px 0; }
.dots { width: 2px; align-self: center; height: 10px; background: repeating-linear-gradient(#999 0 2px, transparent 2px 4px); }
.formula .dots { margin: 0 9px 0 10px; }
.fx { width: 104px; background: #fff; border: 1px solid #c6c6c6; display: flex; justify-content: space-around; align-items: center; }
.fn { font: italic 15px "Liberation Serif", serif; }
.fn small { font-size: 11px; }
.expr { flex: 1; background: #fff; border: 1px solid #c6c6c6; display: flex; align-items: center; padding: 0 2px 0 8px; }
.expr input { flex: 1; border: 0; outline: 0; background: none; }

.workspace { flex: 1; min-height: 0; display: flex; }
.sheet { flex: 1; min-width: 0; overflow: hidden; position: relative; background: #fff; }
table { width: 100%; table-layout: fixed; border-collapse: separate; border-spacing: 0; font: 12px/16px Lato, Carlito, sans-serif; color: #111; }
.rowhead { width: 24px; } .w75 { width: 75px; } .w85 { width: 85px; } .w88 { width: 88px; } .w89 { width: 89px; } .w90 { width: 90px; } .w91 { width: 91px; } .w96 { width: 96px; } .w98 { width: 98px; }
th { background: #e6e6e6; font-weight: 400; color: #333; padding: 0; border-right: 1px solid #b8b8b8; border-bottom: 1px solid #c6c6c6; height: 18px; }
thead th { border-bottom-color: #999; }
tbody th { border-right-color: #999; vertical-align: bottom; }
.corner { background: linear-gradient(135deg, #e6e6e6 60%, #b2b2b2 60%); border: 3px solid #e6e6e6; border-left-width: 7px; border-right: 1px solid #b8b8b8; }
th.current { background: #d2d2d2; color: #3f7259; }
thead th.current { border-bottom: 2px solid #217346; }
tbody th.current { border-right: 2px solid #217346; }
td { padding: 0 2px; height: 19px; text-align: center; vertical-align: middle; border-right: 1px solid #d4d4d4; border-bottom: 1px solid #d4d4d4; white-space: nowrap; }
td[colspan] { font-size: 13px; }
tr:nth-child(4n+3) td { height: 18px; }
.s td { border-color: #333; }
.s td.x { border-color: #d4d4d4; }
.titles td { height: 62px; white-space: normal; font-weight: 700; font-size: 13px; line-height: 19px; }
.yellow { background: #ffff00; color: #4a4a10; }
.strong, .pink, .peach, .steel, .green { font-weight: 700; }
.strong { color: #222; }
.pink { background: #e6b8b7; }
.peach { background: #fcd5b4; }
.blue { background: #00b0f0; color: #123f5c; }
.steel { background: #b8cce4; }
.green { background: #00b050; color: #0b3d1d; }
.selected { position: relative; }
.selected::before { content: ""; position: absolute; inset: -2px; border: 2px solid #217346; }
.selected::after { content: ""; position: absolute; right: -3px; bottom: -3px; width: 5px; height: 5px; background: #217346; border: solid #fff; border-width: 1px 0 0 1px; }
.cursor { position: absolute; left: 267px; top: 109px; }

.vscroll { width: 20px; display: flex; flex-direction: column; padding: 1px 3px 0; border-left: 1px solid #aaa; }
.vscroll button, .hscroll button { width: 14px; height: 14px; background: #fff; border: 1px solid #aaa; display: grid; place-items: center; flex: none; }
.vscroll .track { flex: 97; background: #f0f0f0; }
.vscroll .thumb { flex: 319; background: #fff; border: 1px solid #aaa; }
.tri { display: block; width: 0; height: 0; border: 4px solid transparent; }
.up { border-top: 0; border-bottom-color: #333; }
.down { border-bottom: 0; border-top-color: #333; }
.left { border-left: 0; border-right-color: #333; }
.right { border-right: 0; border-left-color: #333; }
.left.pale { border-right-color: #bbb; }
.right.pale { border-left-color: #bbb; }

.sheets { flex: none; height: 27px; border-top: 1px solid #aaa; border-bottom: 1px solid #c6c6c6; display: flex; align-items: center; color: #555; font-size: 12px; }
.steps { width: 94px; display: flex; gap: 22px; padding-left: 26px; }
.tab { align-self: stretch; padding: 0 11px 1px 12px; }
.tab.active { background: #fff; color: #217346; font-weight: 700; padding: 1px 11px 0; border-bottom: 2px solid #217346; margin: -1px 0 3px; }
.tab.lined { background: linear-gradient(#999, #999) left 4px / 1px 16px no-repeat, linear-gradient(#999, #999) right 4px / 1px 16px no-repeat; }
.plus { margin-left: 30px; height: 16px; }
.sheets .dots { margin-left: auto; }
.hscroll { flex: 0 0 37.3%; display: flex; margin: 0 20px 0 13px; }
.hscroll .thumb { flex: 416; background: #fff; border: 1px solid #aaa; }
.hscroll .track { flex: 33; background: #f0f0f0; }

.status { flex: none; height: 21px; background: #f3f3f3; display: flex; align-items: center; color: #444; font-size: 10px; }
.ready { padding-left: 11px; width: 75px; }
.access { display: flex; align-items: center; gap: 2px; font-size: 11px; }
.views { margin-left: auto; display: flex; align-self: stretch; }
.views button { width: 37px; display: grid; place-items: center; }
.views .on { background: #c8c8c8; }
.zoom { width: 17px; height: 16px; display: grid; place-items: center; }
.status input { appearance: none; width: 94px; height: 14px; margin: 0; background: linear-gradient(#777, #777) center / 100% 1px no-repeat; }
.status input::-webkit-slider-thumb { appearance: none; width: 5px; height: 11px; background: #444; }
.pct { width: 41px; text-align: center; margin-left: 1px; }

.taskbar { flex: none; height: 37px; background: #d3dfea; color: #222; display: flex; align-items: stretch; }
.start { width: 46px; display: grid; place-items: center; }
.search { width: 268px; background: #fff; border: 1px solid #c5ced6; display: flex; align-items: center; padding-left: 9px; gap: 10px; }
.search input { flex: 1; border: 0; outline: 0; font-size: 13px; padding: 0; background: none; }
.search input::placeholder { color: #555; opacity: 1; }
.apps { display: flex; }
.apps button { width: 46px; display: grid; place-items: center; }
.apps .open { background: linear-gradient(#1567b0, #1567b0) center bottom / 38px 2px no-repeat; }
.apps .front { background: linear-gradient(#1567b0, #1567b0) center bottom / 46px 2px no-repeat, #eef3f7; }
.apps .short { background-size: 32px 2px; }
.zm { width: 23px; height: 23px; border-radius: 10px; background: #0b5ce0; color: #fff; font-weight: 700; font-size: 11px; line-height: 21px; }
.tray { margin-left: auto; display: flex; align-items: center; }
.tray button { width: 22px; height: 24px; display: grid; place-items: center; }
.lang { width: 34px; text-align: center; font-size: 10px; }
.tray time { width: 66px; text-align: center; line-height: 17px; }
.tray .notes { width: 40px; margin-right: 10px; }
```
